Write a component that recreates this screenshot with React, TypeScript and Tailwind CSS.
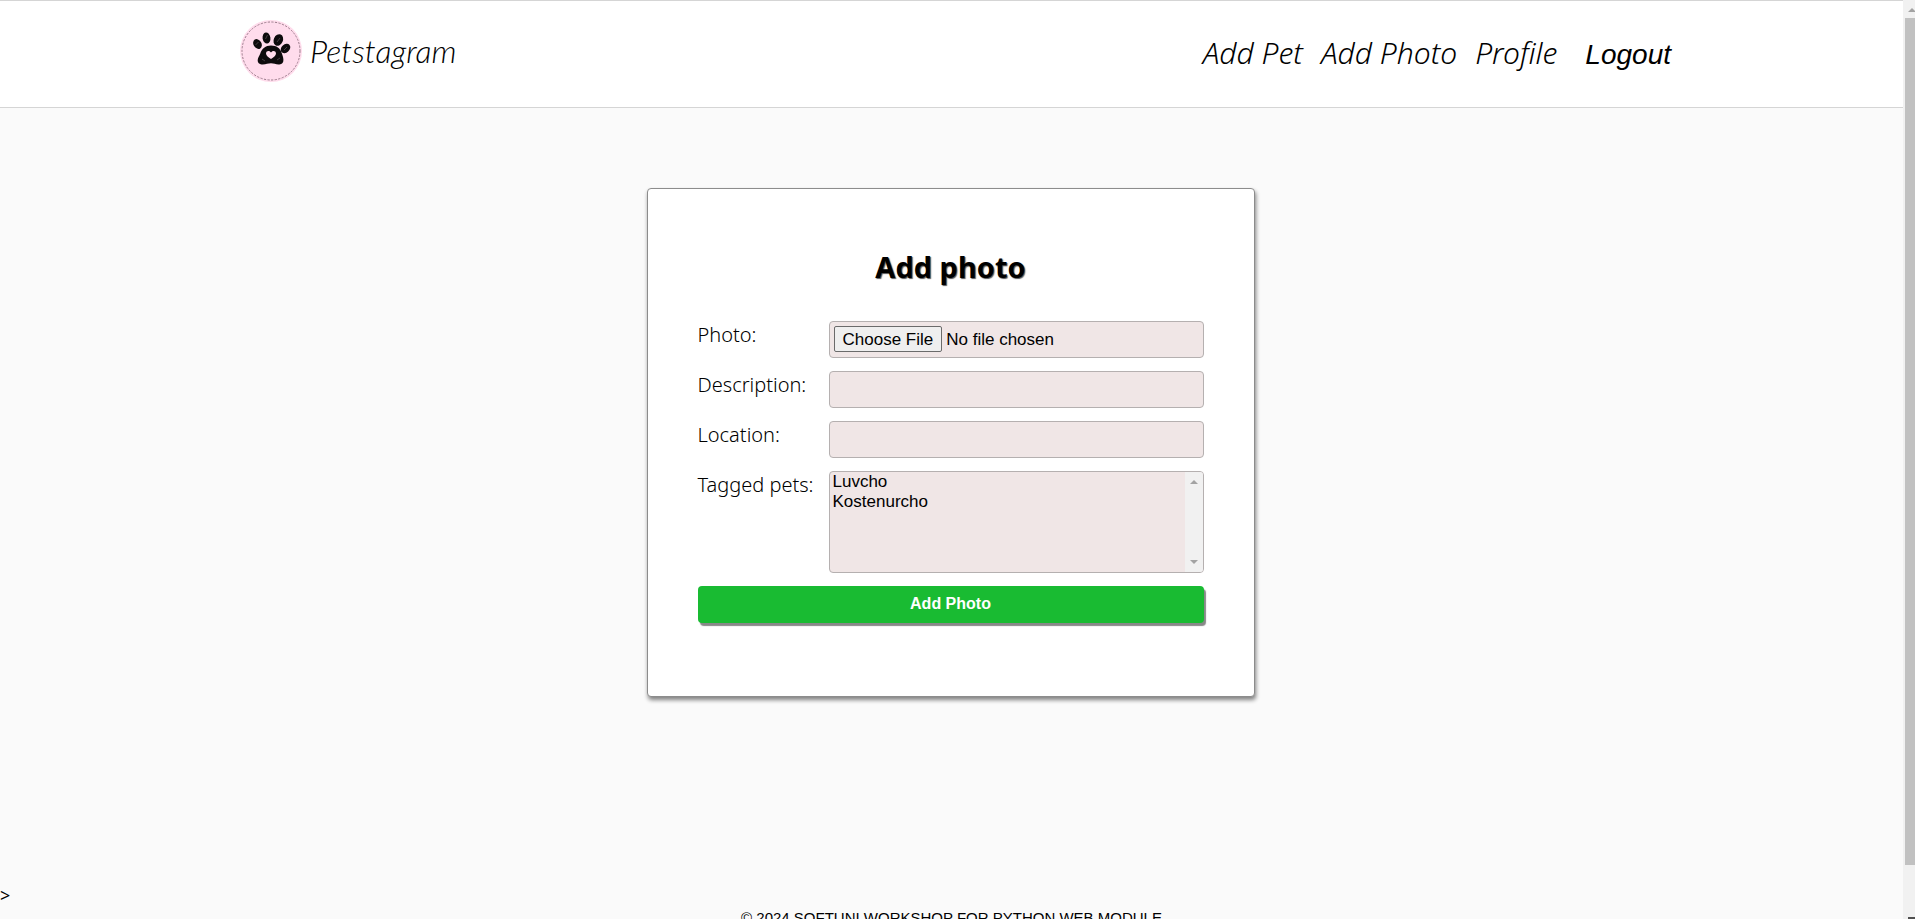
import type { ReactNode } from 'react';

const fieldBox = 'w-full rounded border border-[#b5b0b0] bg-[#f0e6e6] text-[17px] text-black';

function PawLogo() {
  return (
    <svg viewBox="0 0 62 62" className="size-[62px] shrink-0" aria-hidden="true">
      <circle cx="31" cy="31" r="31" fill="#ffdcec" />
      <circle cx="31" cy="31" r="29" fill="none" stroke="#9c7d8c" strokeWidth="1" strokeDasharray="2.2 1.4" />
      <g fill="#0d0b0c">
        <ellipse cx="17.5" cy="24" rx="4" ry="5.2" transform="rotate(-32 17.5 24)" />
        <ellipse cx="26.5" cy="18" rx="3.9" ry="5.6" transform="rotate(-8 26.5 18)" />
        <ellipse cx="38.3" cy="20" rx="4.6" ry="6" transform="rotate(24 38.3 20)" />
        <ellipse cx="45.5" cy="28.5" rx="4" ry="5.4" transform="rotate(48 45.5 28.5)" />
        <path d="M31 25.500c-5.500 0-9 3-10.800 8.200-.8 2.300-2.300 3.600-2.500 6.300-.2 3 2 4.500 5 4.500 3.500 0 5.300-1.200 8.300-1.200s4.800 1.400 8.300 1.200c3-.1 4.300-2 4.100-5-.2-2.500-.9-4-1.600-6.300C40.300 28.200 36.500 25.500 31 25.500z" />
      </g>
      <path d="M31 39c-2.500-1.600-5-3.400-5-5.600 0-2.800 3.800-3.300 5-.8 1.200-2.500 5-2 5 .8 0 2.200-2.500 4-5 5.600z" fill="#ffdcec" />
      <g stroke="#5d5559" strokeWidth=".7" fill="none">
        <path d="M15.500 25l3-3M25.500 19l2-4M37 22l3-4M44 30l3-3M22 39l3 2M37 40l3-2" />
      </g>
    </svg>
  );
}

function Field({ id, label, children }: { id: string; label: string; children: ReactNode }) {
  return (
    <div className="flex items-start">
      <label
        htmlFor={id}
        className="w-[131px] shrink-0 font-['Noto_Sans',sans-serif] text-xl leading-7 font-light whitespace-nowrap"
      >
        {label}
      </label>
      <div className="min-w-0 grow">{children}</div>
    </div>
  );
}

function Arrow({ down = false, className = '' }: { down?: boolean; className?: string }) {
  return (
    <svg viewBox="0 0 8 4" className={`h-1 w-2 shrink-0 fill-[#a3a3a3] ${className}`} aria-hidden="true">
      <path d={down ? 'M0 0h8L4 4z' : 'M0 4h8L4 0z'} />
    </svg>
  );
}

export default function App() {
  return (
    <div className="flex h-screen overflow-hidden bg-[#fafafa] font-['Liberation_Sans',sans-serif] text-base text-black">
      <div className="flex min-w-0 grow flex-col">
        <header className="flex h-[108px] shrink-0 items-start justify-between border-y border-[#d5d5d5] bg-white pr-[232px] pl-[240px]">
          <a href="#home" className="mt-[19px] flex items-center gap-2">
            <PawLogo />
            <span className="font-['Lato',cursive] text-[32px] leading-10 font-light italic">Petstagram</span>
          </a>
          <nav className="mt-8 flex items-baseline font-['Noto_Sans',sans-serif] text-3xl leading-10 font-light italic">
            <a href="#add-pet">Add Pet</a>
            <a href="#add-photo" className="ml-[18px]">Add Photo</a>
            <a href="#profile" className="ml-[18px]">Profile</a>
            <button type="button" className="ml-7 font-['Liberation_Sans',sans-serif] text-[28px] font-normal italic">
              Logout
            </button>
          </nav>
        </header>

        <main className="flex shrink-0 flex-col px-6 pr-[26px]">
          <form
            onSubmit={(event) => event.preventDefault()}
            className="mx-auto mt-20 w-[608px] max-w-full rounded border border-[#8c8c8c] bg-white px-[50px] pt-[58px] pb-[73px] shadow-[1px_3px_4px_#808080]"
          >
            <h1 className="text-center font-['Noto_Sans',sans-serif] text-[29px] leading-10 font-bold [text-shadow:1px_1px_1px_#555]">
              Add photo
            </h1>
            <div className="mt-[34px] flex flex-col gap-[13px]">
              <Field id="photo" label="Photo:">
                <input
                  id="photo"
                  type="file"
                  className={`${fieldBox} block h-[37px] p-1 file:mr-1 file:h-[26px] file:rounded-xs file:border file:border-[#6b6b6b] file:bg-[#efefef] file:px-2 file:text-black`}
                />
              </Field>
              <Field id="description" label="Description:">
                <input id="description" type="text" className={`${fieldBox} block h-[37px] px-1`} />
              </Field>
              <Field id="location" label="Location:">
                <input id="location" type="text" className={`${fieldBox} block h-[37px] px-1`} />
              </Field>
              <Field id="pets" label="Tagged pets:">
                <div className={`${fieldBox} flex h-[102px] overflow-hidden`}>
                  <select id="pets" multiple className="min-w-0 grow overflow-hidden bg-transparent">
                    <option className="min-h-5 px-[3px] py-0">Luvcho</option>
                    <option className="min-h-5 px-[3px] py-0">Kostenurcho</option>
                  </select>
                  <div className="flex w-[18px] flex-col items-center justify-between bg-[#f1f1f1] py-2">
                    <Arrow />
                    <Arrow down />
                  </div>
                </div>
              </Field>
              <button
                type="submit"
                className="h-[37px] w-full rounded bg-[#19bb32] pb-[2px] font-bold text-white shadow-[2px_3px_1px_#888]"
              >
                Add Photo
              </button>
            </div>
          </form>
        </main>

        <p className="mt-[186px] shrink-0 font-['Noto_Sans',sans-serif] text-lg leading-6">&gt;</p>
        <footer className="mt-px shrink-0 text-center text-[15px] leading-5">© 2024 SOFTUNI WORKSHOP FOR PYTHON WEB MODULE</footer>
      </div>

      <div className="flex w-3 shrink-0 flex-col overflow-hidden bg-[#f1f1f1]" aria-hidden="true">
        <Arrow className="mt-2 ml-[5px]" />
        <div className="mt-[6px] ml-[2px] h-[847px] shrink-0 bg-[#c1c1c1]" />
        <div className="mt-auto ml-[5px] h-[2px] shrink-0 bg-[#505050]" />
      </div>
    </div>
  );
}
